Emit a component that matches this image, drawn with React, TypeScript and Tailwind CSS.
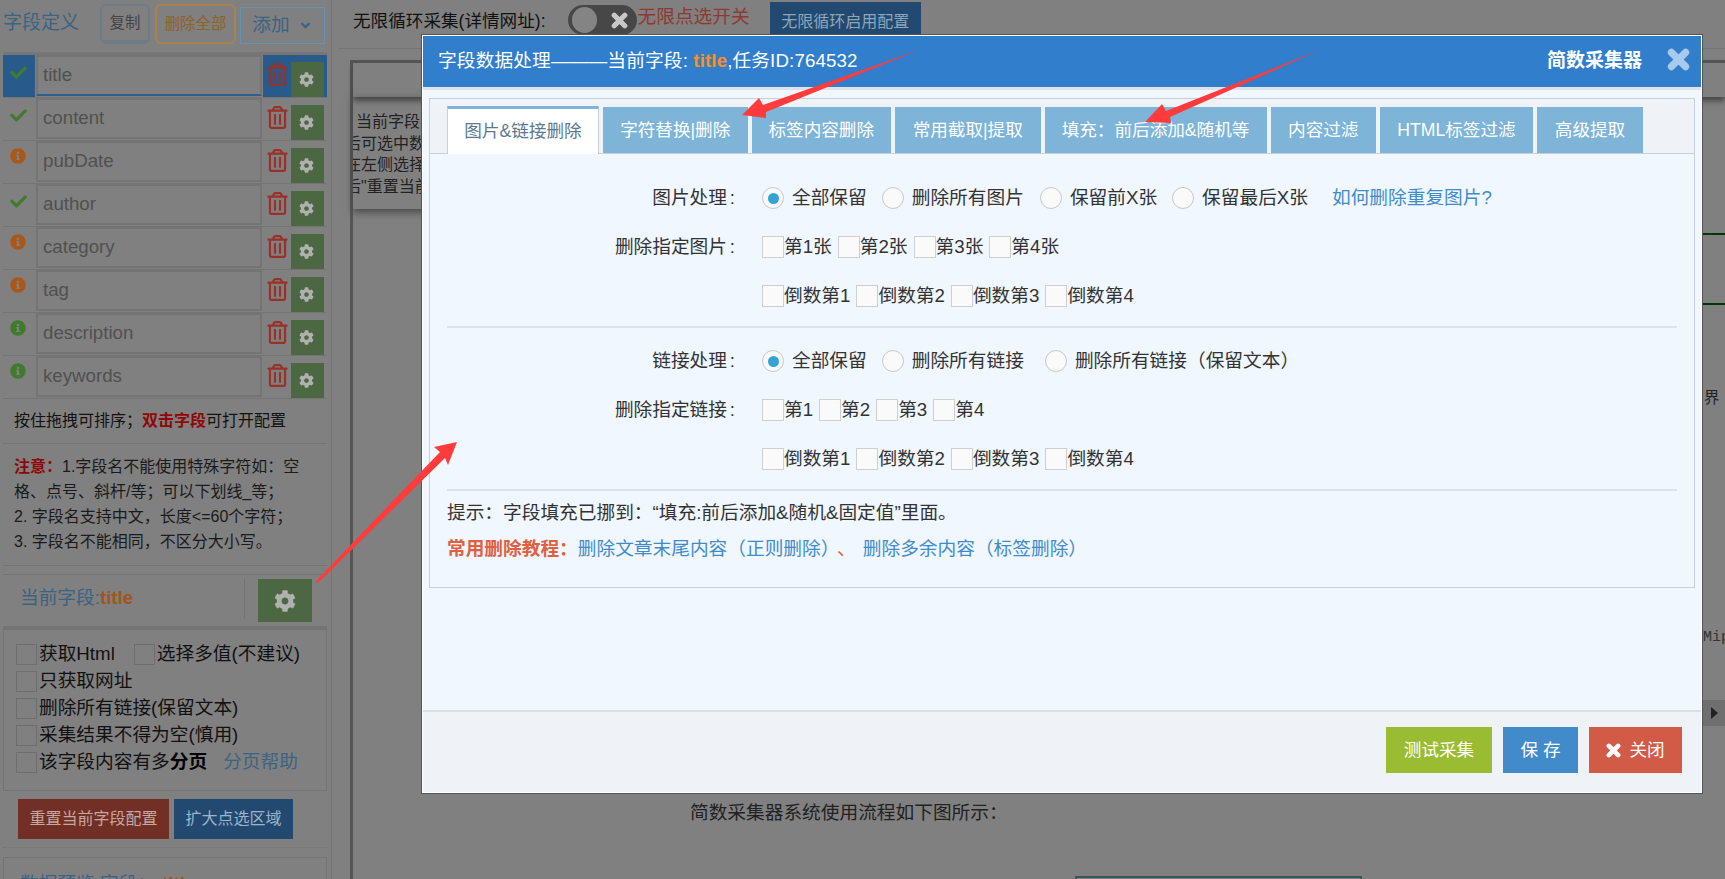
import { FaAngleDown, FaCheck, FaCog, FaInfoCircle, FaRegTrashAlt } from "react-icons/fa";

const FONT = "[font-family:'Liberation_Sans','Noto_Sans_CJK_SC',sans-serif]";

const fields = [
  { name: "title", status: "ok", active: true },
  { name: "content", status: "ok" },
  { name: "pubDate", status: "warn" },
  { name: "author", status: "ok" },
  { name: "category", status: "warn" },
  { name: "tag", status: "warn" },
  { name: "description", status: "info" },
  { name: "keywords", status: "info" },
];

const tabs = [
  { label: "图片&链接删除", width: "w-[152px]", active: true },
  { label: "字符替换|删除", width: "w-[144.5px]" },
  { label: "标签内容删除", width: "w-[139.5px]" },
  { label: "常用截取|提取", width: "w-[145.5px]" },
  { label: "填充：前后添加&随机等", width: "w-[222px]" },
  { label: "内容过滤", width: "w-[105.5px]" },
  { label: "HTML标签过滤", width: "w-[153px]" },
  { label: "高级提取", width: "w-[106px]" },
];

// chunky close cross, heavier than the icon packages have it
function Cross({ size, className }: { size: number; className?: string }) {
  return (
    <svg viewBox="0 0 21 21" width={size} height={size} className={className} fill="none" stroke="currentColor" strokeWidth="6.5" strokeLinecap="round">
      <path d="M4 4 L17 17 M17 4 L4 17" />
    </svg>
  );
}

function FieldRow({ name, status, active }: { name: string; status: string; active?: boolean }) {
  return (
    <div className="flex h-[43px] border-b border-[#747474]">
      <div className={`w-[32px] shrink-0 pl-[7px] ${status === "ok" ? "pt-[9px]" : "pt-[7px]"} ${active ? "bg-[#285a8c]" : ""}`}>
        {status === "ok" && <FaCheck size={17} className="text-[#437a2e]" />}
        {status === "warn" && <FaInfoCircle size={16} className="text-[#a9581a]" />}
        {status === "info" && <FaInfoCircle size={16} className="text-[#407a2d]" />}
      </div>
      <div className={`ml-[1px] flex h-[41px] w-[226px] items-center border-2 pl-[5px] text-[18.7px] text-[#505050] border-[#747474] ${active ? "border-b-[#2a5f90]" : ""}`}>
        {name}
      </div>
      <div className={`ml-[1px] flex w-[64px] items-end ${active ? "bg-[#285a8c]" : ""}`}>
        <div className="flex h-[35px] w-[28px] items-start justify-center">
          <FaRegTrashAlt size={23} className="mt-[1px] text-[#983228]" />
        </div>
        <div className="flex h-[35px] w-[33px] items-center justify-center bg-[#4b6843]">
          <FaCog size={15} className="-ml-[2px] text-[#b0b0b0]" />
        </div>
      </div>
    </div>
  );
}

function SideCheck({ label, bold, extra }: { label: string; bold?: string; extra?: string }) {
  return (
    <div className="flex h-[27px] items-center">
      <span className="h-[21px] w-[21px] shrink-0 border border-[#6e6e6e]" />
      <span className="ml-[2px] text-[18.7px] text-[#111]">
        {label}
        {bold && <b className="text-black">{bold}</b>}
      </span>
      {extra && <span className="ml-[16px] text-[18.7px] text-[#3b6382]">{extra}</span>}
    </div>
  );
}

function Sidebar() {
  return (
    <aside className="h-[879px] w-[332px] shrink-0 overflow-hidden border-r border-[#747474] pl-[3px] pr-[4px]">
      <div className="flex h-[52px] items-start">
        <h2 className="mt-[12px] w-[97px] text-[19px] font-normal leading-[22px] text-[#3b6382]">字段定义</h2>
        <button className="mt-[4px] h-[40px] w-[50px] rounded-[6px] border-2 border-b-4 border-[#6d7c86] text-[15.4px] text-[#444]">复制</button>
        <button className="ml-[5px] mt-[4px] h-[40px] w-[81px] rounded-[6px] border-2 border-[#a8824f] text-[15.4px] text-[#8f6228]">删除全部</button>
        <button className="ml-[4px] mt-[7px] flex h-[37px] w-[85px] items-center justify-center gap-[8px] border border-[#6593b6] text-[18.7px] text-[#3b6382]">
          添加 <FaAngleDown size={15} />
        </button>
      </div>
      <div className="h-[3px] bg-[#767676]" />
      {fields.map((f) => (
        <FieldRow key={f.name} {...f} />
      ))}
      <div className="flex h-[45px] items-center border-b border-[#747474] pl-[11px] text-[16px] text-[#111]">
        按住拖拽可排序；<b className="text-[#8f0808]">双击字段</b>可打开配置
      </div>
      <div className="h-[122px] border-b border-[#747474] pl-[11px] pt-[10px] text-[16px] leading-[25px] text-[#1a1a1a]">
        <p><b className="text-[#8f0808]">注意：</b>1.字段名不能使用特殊字符如：空</p>
        <p>格、点号、斜杆/等；可以下划线_等；</p>
        <p>2. 字段名支持中文，长度&lt;=60个字符；</p>
        <p>3. 字段名不能相同，不区分大小写。</p>
      </div>
      <div className="mt-[8px] flex h-[52px] items-start border-t border-[#747474]">
        <div className="ml-[17px] mt-[12px] w-[224px] text-[18.7px] leading-[22px] text-[#3b6382]">
          当前字段:<b className="text-[#a0561a]">title</b>
        </div>
        <div className="mt-[4px] h-[40px] w-px bg-[#747474]" />
        <div className="ml-[13px] mt-[4px] flex h-[43px] w-[54px] items-center justify-center bg-[#4b6843]">
          <FaCog size={22} className="text-[#b0b0b0]" />
        </div>
      </div>
      <div className="h-[165px] border-x border-b border-t-4 border-[#747474] pl-[12px] pt-[11px]">
        <div className="flex">
          <SideCheck label="获取Html" />
          <div className="ml-[19px]">
            <SideCheck label="选择多值(不建议)" />
          </div>
        </div>
        <SideCheck label="只获取网址" />
        <SideCheck label="删除所有链接(保留文本)" />
        <SideCheck label="采集结果不得为空(慎用)" />
        <SideCheck label="该字段内容有多" bold="分页" extra="分页帮助" />
      </div>
      <div className="ml-[15px] mt-[8px] flex gap-[5px] text-[16px]">
        <button className="h-[40px] w-[151px] bg-[#722f25] text-[#c5a89f]">重置当前字段配置</button>
        <button className="h-[40px] w-[119px] bg-[#224a70] text-[#9fb4c8]">扩大点选区域</button>
      </div>
      <div className="mt-[8px] border-b border-dotted border-[#747474]" />
      <div className="mt-[9px] h-[60px] border border-[#747474] pl-[16px] pt-[12px] text-[18.7px] text-[#3b6382]">
        数据预览 字段：<b className="ml-[6px] text-[#a0561a]">title</b>
      </div>
    </aside>
  );
}

function MainArea() {
  return (
    <main className="min-w-0 flex-1 overflow-hidden pl-[7px]">
      <div className="flex h-[49px] items-start border-b border-[#747474] pl-[14px]">
        <span className="mt-[9px] whitespace-nowrap text-[17.6px] leading-[24px] text-[#111]">无限循环采集(详情网址):</span>
        <span className="ml-[22px] mt-[5px] flex h-[30px] w-[69px] items-center justify-between rounded-full bg-[#474747] pl-[4px] pr-[9px]">
          <span className="h-[26px] w-[25px] rounded-full bg-[#848484]" />
          <Cross size={17} className="text-[#c8c8c8]" />
        </span>
        <span className="ml-[1px] mt-[5px] whitespace-nowrap text-[18.7px] leading-[24px] text-[#8d3b30]">无限点选开关</span>
        <button className="ml-[20px] mt-[2px] h-[33px] w-[151px] whitespace-nowrap bg-[#224a70] pt-[6px] text-[16px] text-[#8ea6bb]">无限循环启用配置</button>
      </div>
      <div className="ml-[11px] mt-[11px] h-[830px] border-l-[3px] border-t-[3px] border-[#555]">
        <div className="h-[34px] shadow-[0_4px_6px_#444]" />
        <div className="h-[112px] w-[110px] overflow-hidden pt-[14px] text-[16px] leading-[21.5px] text-[#222] shadow-[0_3px_8px_#444]">
          <p className="pl-[3px]">当前字段</p>
          <p className="-ml-[8px] whitespace-nowrap">后可选中数据</p>
          <p className="-ml-[8px] whitespace-nowrap">在左侧选择</p>
          <p className="-ml-[8px] whitespace-nowrap">后"重置当前</p>
        </div>
        <div className="ml-[1300px] mt-[24px] h-[2px] bg-[#003a00]" />
        <div className="ml-[1300px] mt-[68px] h-[2px] bg-[#003a00]" />
        <div className="mt-[83px] h-[20px] whitespace-nowrap pl-[1351px] text-[15.4px] leading-[20px] text-[#222]">界</div>
        <div className="mt-[220px] h-[20px] whitespace-nowrap pl-[1350px] font-['Liberation_Mono'] text-[15px] leading-[20px] text-[#333]">Mip</div>
        <div className="ml-auto mt-[52px] flex h-[26px] w-[22px] items-center justify-center bg-[#6f6f6f]">
          <span className="border-y-[6px] border-l-[7px] border-y-transparent border-l-[#222]" />
        </div>
        <div className="ml-[337px] mt-[75px] h-[24px] whitespace-nowrap text-[18.7px] leading-[24px] text-[#222]">简数采集器系统使用流程如下图所示：</div>
        <div className="ml-[722px] mt-[51px] h-[20px] w-[287px] border-2 border-[#335a55]" />
      </div>
    </main>
  );
}

function Radio({ label, checked, className }: { label: string; checked?: boolean; className?: string }) {
  return (
    <label className={`flex items-center ${className ?? ""}`}>
      <span className="flex h-[22px] w-[22px] shrink-0 items-center justify-center rounded-full border border-[#c8c8c8] bg-[#fafafa]">
        {checked && <span className="h-[11px] w-[11px] rounded-full bg-[#32a3d4]" />}
      </span>
      <span className="ml-[8px] whitespace-nowrap">{label}</span>
    </label>
  );
}

function Check({ label }: { label: string }) {
  return (
    <label className="flex items-center">
      <span className="h-[22px] w-[22px] shrink-0 border border-[#cfcfcf] bg-[#fafafa]" />
      <span className="whitespace-nowrap">{label}</span>
    </label>
  );
}

function FormRow({ label, children }: { label?: string; children: React.ReactNode }) {
  return (
    <div className="flex h-[49px] items-center">
      <div className="w-[288px] shrink-0 text-right">
        {label}
        {label && <span className="inline-block w-[8px]">:</span>}
      </div>
      <div className="ml-[27px] flex items-center gap-[6px]">{children}</div>
    </div>
  );
}

function Modal() {
  return (
    <div className="absolute left-[422px] top-[35px] flex h-[758px] w-[1280px] flex-col border border-white bg-[#f0f7ff] shadow-[0_0_0_1px_#555] text-[18.7px] text-[#333]">
      <div className="flex h-[51px] shrink-0 items-center bg-[#307ecc] pl-[15px] text-white">
        <div className="flex-1 whitespace-nowrap tracking-[0.13px]">
          字段数据处理———当前字段: <b className="text-[#ff8c26]">title</b>,任务ID:764532
        </div>
        <b className="text-[19px]">简数采集器</b>
        <Cross size={23} className="-mt-[4px] ml-[25px] mr-[11px] text-[#a9cbeb]" />
      </div>
      <div className="h-[3px] shrink-0 bg-[#dfe3e8]" />
      <div className="mx-[6px] mt-[8px] h-[490px] shrink-0 border border-[#c5d0dc]">
        <div className="flex h-[55px] gap-[4px] border-b border-[#c5d0dc] bg-[#eff3f8] pl-[17px] pt-[8px]">
          {tabs.map((t) =>
            t.active ? (
              <div key={t.label} className={`relative z-10 -mt-[1px] flex h-[48px] items-center justify-center border-x border-t-[3px] border-x-[#c5d0dc] border-t-[#7db4d8] bg-white text-[17.6px] text-[#5b7a91] ${t.width}`}>
                {t.label}
              </div>
            ) : (
              <div key={t.label} className={`flex h-[46px] items-center justify-center whitespace-nowrap bg-[#7db4d8] text-[17.6px] text-white ${t.width}`}>
                {t.label}
              </div>
            ),
          )}
        </div>
        <div className="px-[17px] pt-[20px]">
          <FormRow label="图片处理">
            <Radio label="全部保留" checked />
            <Radio label="删除所有图片" className="ml-[9px]" />
            <Radio label="保留前X张" className="ml-[10px]" />
            <Radio label="保留最后X张" className="ml-[9px]" />
            <a className="ml-[18px] whitespace-nowrap text-[#428bca]">如何删除重复图片?</a>
          </FormRow>
          <FormRow label="删除指定图片">
            {["第1张", "第2张", "第3张", "第4张"].map((t) => <Check key={t} label={t} />)}
          </FormRow>
          <FormRow>
            {["倒数第1", "倒数第2", "倒数第3", "倒数第4"].map((t) => <Check key={t} label={t} />)}
          </FormRow>
          <div className="mt-[5px] border-t-2 border-[#dde3e8]" />
          <div className="mt-[9px]" />
          <FormRow label="链接处理">
            <Radio label="全部保留" checked />
            <Radio label="删除所有链接" className="ml-[9px]" />
            <Radio label="删除所有链接（保留文本）" className="ml-[15px]" />
          </FormRow>
          <FormRow label="删除指定链接">
            {["第1", "第2", "第3", "第4"].map((t) => <Check key={t} label={t} />)}
          </FormRow>
          <FormRow>
            {["倒数第1", "倒数第2", "倒数第3", "倒数第4"].map((t) => <Check key={t} label={t} />)}
          </FormRow>
          <div className="mt-[5px] border-t-2 border-[#dde3e8]" />
          <p className="mt-[10px] leading-[24px]">
            提示：字段填充已挪到：<span className="font-['Liberation_Sans']">“</span>填充:前后添加&amp;随机&amp;固定值<span className="font-['Liberation_Sans']">”</span>里面。
          </p>
          <p className="mt-[12px] leading-[24px] text-[#428bca]">
            <b className="text-[#e0603f]">常用删除教程：</b>删除文章末尾内容（正则删除）<span className="px-[7px] text-[#e0603f]">、</span>删除多余内容（标签删除）
          </p>
        </div>
      </div>
      <div className="flex-1" />
      <div className="flex h-[82px] shrink-0 justify-end gap-[11px] border-t-2 border-[#dcdfe2] bg-[#eff3f8] pr-[19px] pt-[15px] text-white">
        <button className="h-[46px] w-[106px] bg-[#9abc32] text-[17.6px]">测试采集</button>
        <button className="h-[46px] w-[75px] bg-[#428bca] text-[17.6px]">保 存</button>
        <button className="flex h-[46px] w-[93px] items-center justify-center gap-[8px] bg-[#d15b47] text-[17.6px]">
          <Cross size={15} /> 关闭
        </button>
      </div>
    </div>
  );
}

function Arrows() {
  return (
    <svg className="pointer-events-none absolute left-0 top-0" width="1725" height="879" fill="#ff3b3b">
      <polygon points="919,50 763,105 759,98 742,115 766,118 766,112" />
      <polygon points="1320,50 1166,111 1162,104 1145,122 1171,123 1170,117" />
      <polygon points="316,581 440,452 434,447 457,442 448,465 445,458 318,583" />
    </svg>
  );
}

export default function App() {
  return (
    <div className={`relative flex h-[879px] w-full overflow-hidden bg-[#808080] ${FONT}`}>
      <Sidebar />
      <MainArea />
      <Modal />
      <Arrows />
    </div>
  );
}
